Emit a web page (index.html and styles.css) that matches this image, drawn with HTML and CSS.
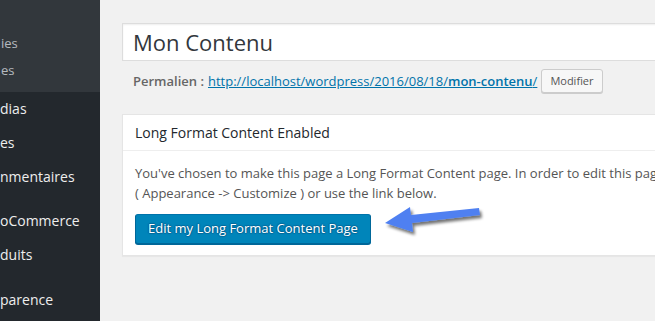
FILE: index.html
```html
<!DOCTYPE html>
<html lang="fr">
<head>
<meta charset="utf-8">
<title>Modifier la page</title>
<link rel="stylesheet" href="styles.css">
</head>
<body>
<div class="admin">
  <nav class="sidebar">
    <ul class="submenu">
      <li>ies</li>
      <li>es</li>
    </ul>
    <ul class="menu">
      <li>dias</li>
      <li>es</li>
      <li>nmentaires</li>
      <li class="sep"></li>
      <li>oCommerce</li>
      <li>duits</li>
      <li class="sep"></li>
      <li>parence</li>
    </ul>
  </nav>
  <main class="content">
    <div class="titlewrap">
      <input class="title" type="text" value="Mon Contenu">
    </div>
    <div class="slugbox">
      <strong class="slug-label">Permalien :</strong>
      <a class="slug-link" href="#">http://localhost/wordpress/2016/08/18/<b>mon-contenu</b>/</a>
      <button class="btn-small">Modifier</button>
    </div>
    <section class="postbox">
      <h2 class="hndle">Long Format Content Enabled</h2>
      <div class="inside">
        <p class="note">You've chosen to make this page a Long Format Content page. In order to edit this page, please open the Customizer<br>( Appearance -&gt; Customize ) or use the link below.</p>
        <button class="btn-primary">Edit my Long Format Content Page</button>
      </div>
    </section>
  </main>
  <svg class="arrow" width="110" height="50" viewBox="0 0 110 50" aria-hidden="true">
    <defs>
      <filter id="sh" x="-20%" y="-30%" width="140%" height="160%">
        <feGaussianBlur in="SourceAlpha" stdDeviation="1.6"/>
        <feOffset dx="1.5" dy="2.5"/>
        <feComponentTransfer><feFuncA type="linear" slope="0.55"/></feComponentTransfer>
        <feMerge><feMergeNode/><feMergeNode in="SourceGraphic"/></feMerge>
      </filter>
    </defs>
    <polygon filter="url(#sh)" fill="#4f80f1"
      points="5,28 30,12 31,20 99,13 100,20 32,28 33,37"/>
  </svg>
</div>
</body>
</html>
```
FILE: styles.css
```css
* { box-sizing: border-box; }
html, body {
  margin: 0;
  padding: 0;
  height: 100%;
  overflow: hidden;
  background: #f1f1f1;
}
body {
  font-family: "Open Sans", "Liberation Sans", sans-serif;
  font-size: 13px;
  color: #444;
}
.admin {
  position: relative;
  display: flex;
  min-height: 321px;
  width: 900px;
}
.sidebar {
  width: 100px;
  flex: none;
  background: #23282d;
  overflow: hidden;
  white-space: nowrap;
}
.sidebar ul { list-style: none; margin: 0; }
.submenu {
  background: #32373c;
  padding: 30px 0 8px;
}
.submenu li {
  height: 27px;
  line-height: 27px;
  font-size: 13px;
  color: rgba(240, 245, 250, 0.7);
  padding-left: 1px;
}
.menu { padding: 0; }
.menu li {
  height: 34px;
  line-height: 34px;
  font-size: 14px;
  color: #eee;
}
.menu li.sep { height: 10px; }
.menu li:last-child { margin-top: 1px; }

.content {
  flex: 1;
  padding: 23px 0 0 22px;
}
.titlewrap { margin: 0; }
.title {
  display: block;
  width: 100%;
  height: 38px;
  margin: 0;
  padding: 0 10px;
  border: 1px solid #ddd;
  box-shadow: inset 0 1px 2px rgba(0, 0, 0, 0.07);
  background: #fff;
  font-family: "Open Sans", "Liberation Sans", sans-serif;
  font-size: 22px;
  color: #32373c;
  outline: none;
}
.slugbox {
  display: flex;
  align-items: center;
  gap: 4px;
  margin-top: 8px;
  padding-left: 11px;
  height: 24px;
  line-height: 24px;
  color: #666;
}
.slug-label { font-weight: 600; }
.slug-link {
  color: #0073aa;
  text-decoration: underline;
}
.slug-link b { font-weight: 600; }
.btn-small {
  height: 24px;
  padding: 0 8px 1px;
  border: 1px solid #ccc;
  border-radius: 3px;
  background: #f7f7f7;
  box-shadow: 0 1px 0 #ccc;
  font-family: "Open Sans", "Liberation Sans", sans-serif;
  font-size: 11px;
  color: #555;
  line-height: 22px;
}
.postbox {
  margin-top: 21px;
  background: #fff;
  border: 1px solid #e5e5e5;
  box-shadow: 0 1px 1px rgba(0, 0, 0, 0.04);
}
.hndle {
  margin: 0;
  padding: 8px 12px 7px;
  font-size: 14px;
  font-weight: 400;
  line-height: 20px;
  color: #23282d;
  border-bottom: 1px solid #eee;
}
.inside {
  padding: 13px 12px 11px;
}
.note {
  margin: 0 0 11px;
  line-height: 19.5px;
  white-space: nowrap;
  color: #555;
}
.btn-primary {
  display: block;
  height: 30px;
  padding: 0 12px 2px;
  border: 1px solid #0073aa;
  border-color: #0073aa #006799 #006799;
  border-radius: 3px;
  background: #0085ba;
  box-shadow: 0 1px 0 #006799;
  font-family: "Open Sans", "Liberation Sans", sans-serif;
  font-size: 13px;
  line-height: 26px;
  color: #fff;
  text-shadow: 0 -1px 1px #006799, 1px 0 1px #006799, 0 1px 1px #006799, -1px 0 1px #006799;
}
.arrow {
  position: absolute;
  left: 380px;
  top: 195px;
}
```
